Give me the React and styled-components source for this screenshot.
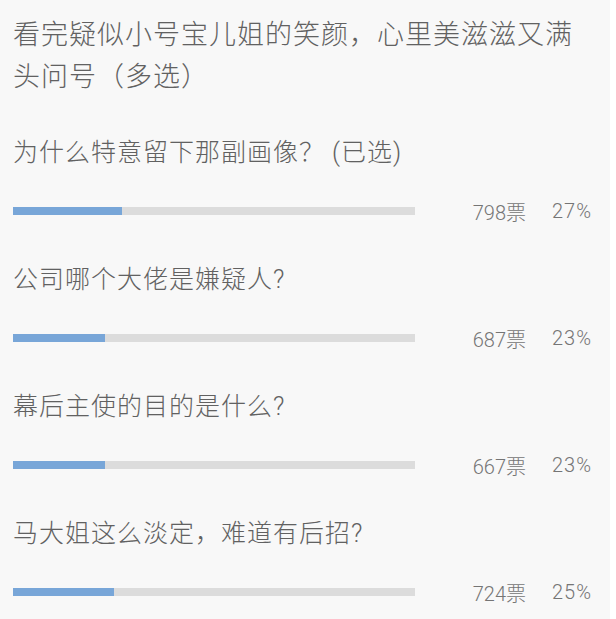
import React from "react"
import styled, { createGlobalStyle } from "styled-components"

const GlobalStyle = createGlobalStyle`
    html, body {
        margin: 0;
        padding: 0;
        background: #ffffff;
    }
`

const Page = styled.div`
    width: 610px;
    height: 619px;
    background: #f8f8f8;
    padding: 14px 0 0 13px;
    box-sizing: border-box;
    font-family: Roboto, "Noto Sans CJK SC", sans-serif;
    font-weight: 300;
    overflow: hidden;
`

const Title = styled.div`
    font-size: 27px;
    line-height: 42px;
    letter-spacing: 1px;
    color: #616161;
    width: 580px;
`

const Option = styled.div`
    margin-top: 35px;
    & + & {
        margin-top: 37px;
    }
`

const Question = styled.div`
    font-size: 25px;
    line-height: 40px;
    letter-spacing: 1px;
    color: #616161;
    white-space: nowrap;
`

const StatRow = styled.div`
    display: flex;
    align-items: center;
    height: 24px;
    margin-top: 26px;
`

const Track = styled.div`
    width: 402px;
    height: 8px;
    background: #dcdcdc;
    flex-shrink: 0;
`

const Fill = styled.div`
    height: 100%;
    background: #78a6d8;
`

const Count = styled.div`
    width: 111px;
    text-align: right;
    font-size: 20px;
    color: #757575;
`

const Percent = styled.div`
    width: 66px;
    text-align: right;
    font-size: 20px;
    color: #757575;
    letter-spacing: 1px;
`

const options = [
    { text: "为什么特意留下那副画像？ (已选)", votes: 798, pct: 27 },
    { text: "公司哪个大佬是嫌疑人?", votes: 687, pct: 23 },
    { text: "幕后主使的目的是什么?", votes: 667, pct: 23 },
    { text: "马大姐这么淡定，难道有后招?", votes: 724, pct: 25 },
]

export default function App() {
    return (
        <Page>
            <GlobalStyle />
            <Title>看完疑似小号宝儿姐的笑颜，心里美滋滋又满头问号（多选）</Title>
            {options.map((o) => (
                <Option key={o.text}>
                    <Question>{o.text}</Question>
                    <StatRow>
                        <Track>
                            <Fill style={{ width: `${o.pct}%` }} />
                        </Track>
                        <Count>{o.votes}票</Count>
                        <Percent>{o.pct}%</Percent>
                    </StatRow>
                </Option>
            ))}
        </Page>
    )
}
